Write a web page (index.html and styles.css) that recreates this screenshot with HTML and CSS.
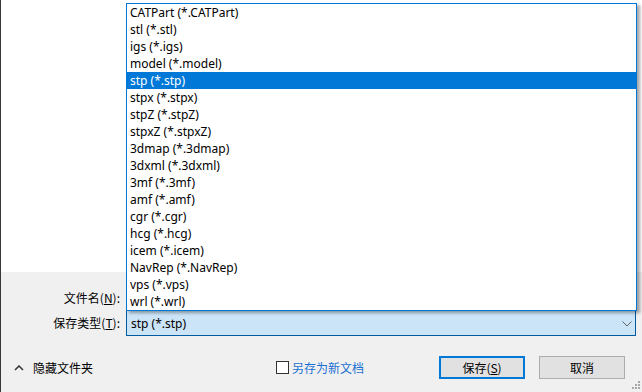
FILE: index.html
```html
<!DOCTYPE html>
<html lang="zh-CN">
<head>
    <meta charset="UTF-8">
    <title>另存为</title>
    <link rel="stylesheet" href="styles.css">
</head>
<body>
    <div class="dialog">
        <div class="browser"></div>

        <div class="panel">
            <div class="form">
                <label class="label">文件名(<u>N</u>):</label>
                <div class="field"></div>
                <label class="label">保存类型(<u>T</u>):</label>
                <div class="combo">
                    <span>stp (*.stp)</span>
                    <svg class="chevron" width="10" height="6" viewBox="0 0 10 6">
                        <path d="M0.5 0.5 L5 5 L9.5 0.5" fill="none" stroke="#606060" stroke-width="1"/>
                    </svg>
                </div>
            </div>

            <div class="footer">
                <div class="toggle">
                    <svg width="10" height="6" viewBox="0 0 10 6">
                        <path d="M1 5 L5 1 L9 5" fill="none" stroke="#333" stroke-width="1.5"/>
                    </svg>
                    <span>隐藏文件夹</span>
                </div>
                <label class="check">
                    <span class="box"></span>
                    <span>另存为新文档</span>
                </label>
                <div class="buttons">
                    <button class="btn default">保存(<u>S</u>)</button>
                    <button class="btn">取消</button>
                </div>
            </div>
        </div>

        <ul class="typelist">
            <li>CATPart (*.CATPart)</li>
            <li>stl (*.stl)</li>
            <li>igs (*.igs)</li>
            <li>model (*.model)</li>
            <li class="selected">stp (*.stp)</li>
            <li>stpx (*.stpx)</li>
            <li>stpZ (*.stpZ)</li>
            <li>stpxZ (*.stpxZ)</li>
            <li>3dmap (*.3dmap)</li>
            <li>3dxml (*.3dxml)</li>
            <li>3mf (*.3mf)</li>
            <li>amf (*.amf)</li>
            <li>cgr (*.cgr)</li>
            <li>hcg (*.hcg)</li>
            <li>icem (*.icem)</li>
            <li>NavRep (*.NavRep)</li>
            <li>vps (*.vps)</li>
            <li>wrl (*.wrl)</li>
        </ul>

        <div class="grip">
            <i></i><i></i><i></i><i></i><i></i><i></i>
        </div>
    </div>
</body>
</html>
```

FILE: styles.css
```css
body {
    margin: 0;
    width: 642px;
    height: 392px;
    overflow: hidden;
    font-family: "Noto Sans", "Noto Sans CJK SC", sans-serif;
    font-size: 12px;
    color: #000;
}
.dialog {
    position: relative;
    height: 392px;
    border-left: 1px solid #3a3a3a;
    box-sizing: border-box;
}
.browser {
    height: 272px;
    background-color: #fff;
}
.panel {
    height: 120px;
    background-color: #f0f0f0;
    padding-top: 13px;
    box-sizing: border-box;
}
.form {
    display: grid;
    grid-template-columns: 125px 510px;
    grid-template-rows: 25px 26px;
    align-items: center;
}
.label {
    text-align: right;
    padding-right: 6px;
    font-family: "Noto Sans CJK SC", sans-serif;
    line-height: 16px;
}
.field {
    height: 23px;
    border: 1px solid #7a7a7a;
    background: #fff;
}
.combo {
    height: 26px;
    box-sizing: border-box;
    border: 1px solid #005a9e;
    background-color: #cce4f7;
    display: flex;
    align-items: center;
    justify-content: space-between;
    padding: 0 3px 0 4px;
}
.chevron {
    margin-top: 1px;
}
.footer {
    display: flex;
    align-items: center;
    margin-top: 20px;
    height: 23px;
}
.toggle {
    display: flex;
    align-items: center;
    gap: 9px;
    padding-left: 13px;
    width: 262px;
    font-family: "Noto Sans CJK SC", sans-serif;
}
.check {
    display: flex;
    align-items: center;
    gap: 3px;
    color: #1a6fd2;
    font-family: "Noto Sans CJK SC", sans-serif;
}
.box {
    width: 11px;
    height: 11px;
    border: 1px solid #333;
    background: #fff;
}
.buttons {
    display: flex;
    gap: 14px;
    margin-left: 75px;
}
.btn {
    width: 86px;
    height: 23px;
    box-sizing: border-box;
    border: 1px solid #adadad;
    background-color: #e1e1e1;
    font-family: "Noto Sans CJK SC", sans-serif;
    font-size: 12px;
    color: #000;
    padding: 0;
}
.btn.default {
    border: 2px solid #0078d7;
}
.typelist {
    position: absolute;
    left: 125px;
    top: 3px;
    width: 511px;
    margin: 0;
    padding: 0;
    list-style: none;
    background-color: #fff;
    border: 1px solid #0078d7;
    box-sizing: border-box;
    box-shadow: 3px 2px 3px rgba(0, 0, 0, 0.35);
}
.typelist li {
    height: 17px;
    line-height: 17px;
    padding-left: 3px;
    white-space: nowrap;
}
.typelist li.selected {
    background-color: #0078d7;
    color: #fff;
}
.grip {
    position: absolute;
    right: 2px;
    bottom: 3px;
    width: 8px;
    height: 8px;
}
.grip i {
    position: absolute;
    width: 2px;
    height: 2px;
    background: #a8a8a8;
}
.grip i:nth-child(1) { right: 0; top: 0; }
.grip i:nth-child(2) { right: 0; top: 3px; }
.grip i:nth-child(3) { right: 3px; top: 3px; }
.grip i:nth-child(4) { right: 0; top: 6px; }
.grip i:nth-child(5) { right: 3px; top: 6px; }
.grip i:nth-child(6) { right: 6px; top: 6px; }
```
